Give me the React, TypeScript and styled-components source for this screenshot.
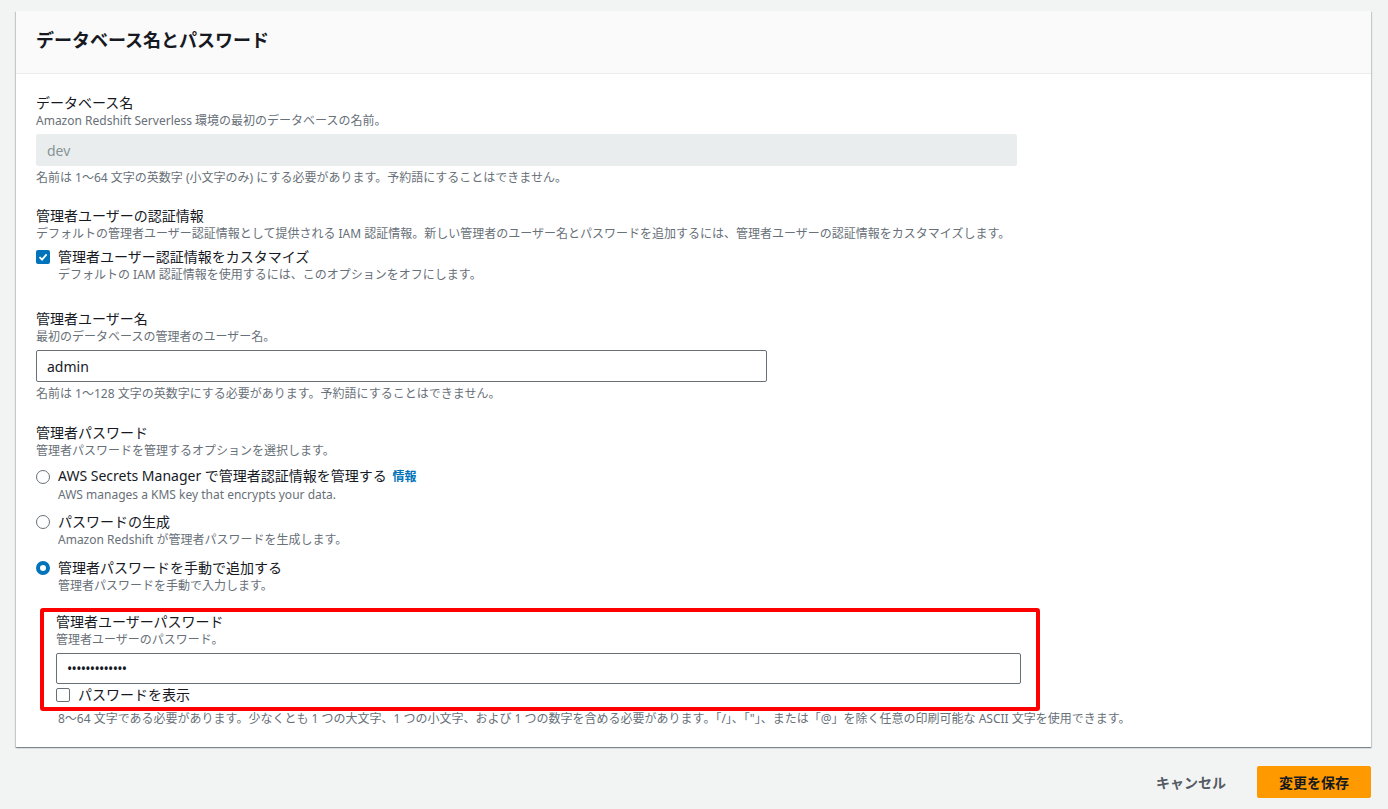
import React from 'react';
import styled, { createGlobalStyle } from 'styled-components';

const GlobalStyle = createGlobalStyle`
  html, body {
    margin: 0;
    padding: 0;
    background: #f2f3f3;
    font-family: "Noto Sans", "Noto Sans CJK JP", sans-serif;
    color: #16191f;
  }
  * { box-sizing: border-box; }
`;

const Page = styled.div`
  padding: 11px 17px 10px 16px;
  min-height: 809px;
`;

const Card = styled.section`
  background: #fff;
  box-shadow: 0 1px 1px 0 rgba(0, 28, 36, 0.3), 1px 1px 1px 0 rgba(0, 28, 36, 0.15),
    -1px 1px 1px 0 rgba(0, 28, 36, 0.15);
`;

const CardHeader = styled.header`
  background: #fafafa;
  border-bottom: 1px solid #eaeded;
  padding: 16px 20px 20px;
  h2 {
    margin: 0;
    font-size: 18px;
    line-height: 26px;
    font-weight: 700;
  }
`;

const CardBody = styled.div`
  padding: 19px 20px 20px;
`;

const Field = styled.div<{ gap?: number }>`
  margin-top: ${({ gap }) => (gap ? `${gap}px` : '0')};
`;

const Label = styled.div`
  font-size: 14px;
  line-height: 20px;
  color: #16191f;
`;

const Desc = styled.div<{ indent?: boolean }>`
  font-size: 12px;
  line-height: 16px;
  color: #687078;
  padding-left: ${({ indent }) => (indent ? '22px' : '0')};
`;

const Constraint = styled.div<{ gap?: number; indent?: number }>`
  font-size: 12px;
  line-height: 16px;
  color: #687078;
  margin-top: ${({ gap }) => gap ?? 4}px;
  padding-left: ${({ indent }) => indent ?? 0}px;
`;

const Input = styled.input<{ width?: number; masked?: boolean }>`
  display: block;
  width: ${({ width }) => (width ? `${width}px` : '100%')};
  height: 32px;
  margin-top: 5px;
  padding: 0 10px;
  font: inherit;
  font-size: 14px;
  color: #16191f;
  background: #fff;
  border: 1px solid #687078;
  border-radius: 2px;
  outline: none;
  letter-spacing: ${({ masked }) => (masked ? '-0.7px' : 'normal')};

  &:disabled {
    background: #eaeded;
    border-color: #eaeded;
    color: #879596;
  }
`;

const OptionRow = styled.label<{ gap?: number }>`
  display: flex;
  align-items: center;
  gap: 8px;
  margin-top: ${({ gap }) => gap ?? 0}px;
  font-size: 14px;
  line-height: 20px;
  color: #16191f;
`;

const CheckBox = styled.span<{ checked?: boolean }>`
  width: 14px;
  height: 14px;
  flex: none;
  border-radius: 2px;
  display: flex;
  align-items: center;
  justify-content: center;
  background: ${({ checked }) => (checked ? '#0073bb' : '#fff')};
  border: ${({ checked }) => (checked ? 'none' : '1.5px solid #687078')};
`;

const Radio = styled.span<{ checked?: boolean }>`
  width: 14px;
  height: 14px;
  flex: none;
  border-radius: 50%;
  background: #fff;
  border: ${({ checked }) => (checked ? '4px solid #0073bb' : '1.5px solid #687078')};
`;

const InfoLink = styled.a`
  font-size: 12px;
  font-weight: 700;
  color: #0073bb;
  text-decoration: none;
  margin-left: 2px;
`;

const Highlight = styled.div`
  margin: 14px 0 0 4px;
  width: 1000px;
  border: 4px solid #ff0000;
  border-radius: 3px;
  padding: 0 15px 2px 12px;
`;

const Footer = styled.footer`
  display: flex;
  justify-content: flex-end;
  align-items: center;
  gap: 10px;
  margin-top: 19px;
`;

const Button = styled.button<{ primary?: boolean }>`
  height: 32px;
  padding: 0 20px;
  font: inherit;
  font-size: 14px;
  font-weight: 700;
  border-radius: 2px;
  cursor: pointer;
  border: 1px solid ${({ primary }) => (primary ? '#ff9900' : 'transparent')};
  background: ${({ primary }) => (primary ? '#ff9900' : 'transparent')};
  color: ${({ primary }) => (primary ? '#16191f' : '#545b64')};
  ${({ primary }) => (primary ? 'width: 114px;' : '')}
`;

const Check = () => (
  <svg width="10" height="10" viewBox="0 0 10 10">
    <path d="M1.5 5.2 L4 7.6 L8.6 2.4" fill="none" stroke="#fff" strokeWidth="1.8" />
  </svg>
);

const App = () => (
  <>
    <GlobalStyle />
    <Page>
      <Card>
        <CardHeader>
          <h2>データベース名とパスワード</h2>
        </CardHeader>
        <CardBody>
          <Field>
            <Label>データベース名</Label>
            <Desc>Amazon Redshift Serverless 環境の最初のデータベースの名前。</Desc>
            <Input width={981} value="dev" disabled readOnly />
            <Constraint>名前は 1〜64 文字の英数字 (小文字のみ) にする必要があります。予約語にすることはできません。</Constraint>
          </Field>

          <Field gap={20}>
            <Label>管理者ユーザーの認証情報</Label>
            <Desc>
              デフォルトの管理者ユーザー認証情報として提供される IAM 認証情報。新しい管理者のユーザー名とパスワードを追加するには、管理者ユーザーの認証情報をカスタマイズします。
            </Desc>
            <OptionRow gap={5}>
              <CheckBox checked>
                <Check />
              </CheckBox>
              管理者ユーザー認証情報をカスタマイズ
            </OptionRow>
            <Desc indent>デフォルトの IAM 認証情報を使用するには、このオプションをオフにします。</Desc>
          </Field>

          <Field gap={26}>
            <Label>管理者ユーザー名</Label>
            <Desc>最初のデータベースの管理者のユーザー名。</Desc>
            <Input width={731} defaultValue="admin" />
            <Constraint>名前は 1〜128 文字の英数字にする必要があります。予約語にすることはできません。</Constraint>
          </Field>

          <Field gap={21}>
            <Label>管理者パスワード</Label>
            <Desc>管理者パスワードを管理するオプションを選択します。</Desc>
            <OptionRow gap={7}>
              <Radio />
              <span>
                AWS Secrets Manager で管理者認証情報を管理する <InfoLink href="#">情報</InfoLink>
              </span>
            </OptionRow>
            <Desc indent>AWS manages a KMS key that encrypts your data.</Desc>
            <OptionRow gap={9}>
              <Radio />
              パスワードの生成
            </OptionRow>
            <Desc indent>Amazon Redshift が管理者パスワードを生成します。</Desc>
            <OptionRow gap={10}>
              <Radio checked />
              管理者パスワードを手動で追加する
            </OptionRow>
            <Desc indent>管理者パスワードを手動で入力します。</Desc>

            <Highlight>
              <Label>管理者ユーザーパスワード</Label>
              <Desc>管理者ユーザーのパスワード。</Desc>
              <Input masked defaultValue="•••••••••••••" style={{ height: 31 }} />
              <OptionRow gap={1}>
                <CheckBox />
                パスワードを表示
              </OptionRow>
            </Highlight>
            <Constraint gap={0} indent={22}>
              8〜64 文字である必要があります。少なくとも 1 つの大文字、1 つの小文字、および 1 つの数字を含める必要があります。「/」、「"」、または「@」を除く任意の印刷可能な ASCII 文字を使用できます。
            </Constraint>
          </Field>
        </CardBody>
      </Card>
      <Footer>
        <Button>キャンセル</Button>
        <Button primary>変更を保存</Button>
      </Footer>
    </Page>
  </>
);

export default App;
